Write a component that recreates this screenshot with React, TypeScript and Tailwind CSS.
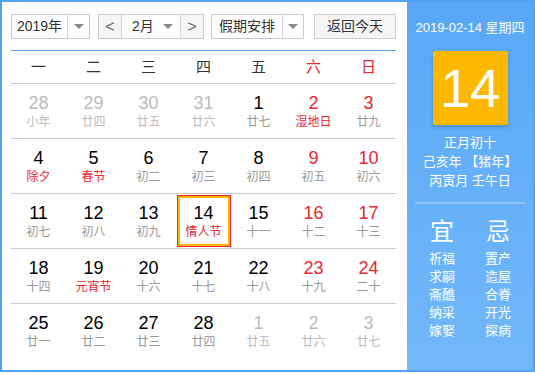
import React from 'react';

type Day = {
  n: number;
  lunar: string;
  other?: boolean;
  weekend?: boolean;
  festival?: boolean;
  today?: boolean;
};

const weeks: Day[][] = [
  [
    { n: 28, lunar: '小年', other: true },
    { n: 29, lunar: '廿四', other: true },
    { n: 30, lunar: '廿五', other: true },
    { n: 31, lunar: '廿六', other: true },
    { n: 1, lunar: '廿七' },
    { n: 2, lunar: '湿地日', weekend: true, festival: true },
    { n: 3, lunar: '廿九', weekend: true },
  ],
  [
    { n: 4, lunar: '除夕', festival: true },
    { n: 5, lunar: '春节', festival: true },
    { n: 6, lunar: '初二' },
    { n: 7, lunar: '初三' },
    { n: 8, lunar: '初四' },
    { n: 9, lunar: '初五', weekend: true },
    { n: 10, lunar: '初六', weekend: true },
  ],
  [
    { n: 11, lunar: '初七' },
    { n: 12, lunar: '初八' },
    { n: 13, lunar: '初九' },
    { n: 14, lunar: '情人节', festival: true, today: true },
    { n: 15, lunar: '十一' },
    { n: 16, lunar: '十二', weekend: true },
    { n: 17, lunar: '十三', weekend: true },
  ],
  [
    { n: 18, lunar: '十四' },
    { n: 19, lunar: '元宵节', festival: true },
    { n: 20, lunar: '十六' },
    { n: 21, lunar: '十七' },
    { n: 22, lunar: '十八' },
    { n: 23, lunar: '十九', weekend: true },
    { n: 24, lunar: '二十', weekend: true },
  ],
  [
    { n: 25, lunar: '廿一' },
    { n: 26, lunar: '廿二' },
    { n: 27, lunar: '廿三' },
    { n: 28, lunar: '廿四' },
    { n: 1, lunar: '廿五', other: true },
    { n: 2, lunar: '廿六', other: true },
    { n: 3, lunar: '廿七', other: true },
  ],
];

const weekdays = ['一', '二', '三', '四', '五', '六', '日'];
const yi = ['祈福', '求嗣', '斋醮', '纳采', '嫁娶'];
const ji = ['置产', '造屋', '合脊', '开光', '探病'];

function Caret() {
  return <span className="h-0 w-0 border-x-[5px] border-t-[5px] border-x-transparent border-t-[#888]" />;
}

function DayCell({ d }: { d: Day }) {
  const numColor = d.other ? 'text-[#bbbbbb]' : d.weekend ? 'text-[#e8262f]' : 'text-black';
  const lunarColor = d.other ? 'text-[#bbbbbb]' : d.festival ? 'text-[#e8262f]' : 'text-[#999999]';
  const inner = (
    <>
      <span className={`text-[18px] leading-[20px] ${numColor}`}>{d.n}</span>
      <span className={`mt-[1px] text-[12px] leading-[16px] ${lunarColor}`}>{d.lunar}</span>
    </>
  );
  if (d.today) {
    return (
      <div className="flex h-full items-center justify-center">
        <div className="h-[52px] w-[54px] border border-[#e8262f]">
          <div className="flex h-full w-full flex-col items-center justify-center border-2 border-[#ffb400]">
            {inner}
          </div>
        </div>
      </div>
    );
  }
  return <div className="flex h-full flex-col items-center justify-center">{inner}</div>;
}

export default function App() {
  return (
    <div
      className="flex h-[372px] w-[535px] border-2 border-[#4fa2f6] bg-white"
      style={{ fontFamily: '"Liberation Sans", "Noto Sans CJK SC", sans-serif' }}
    >
      {/* Left: calendar */}
      <div className="flex w-[405px] flex-col pl-[9px] pr-[11px] pt-[12px]">
        <div className="flex h-[25px] items-stretch text-[14px] text-[#333]">
          <div className="flex w-[79px] border border-[#c9c9c9]">
            <span className="flex w-[55px] items-center justify-center">2019年</span>
            <span className="flex flex-1 items-center justify-center border-l border-[#d9d9d9]"><Caret /></span>
          </div>
          <div className="ml-[8px] flex w-[106px] border border-[#c9c9c9]">
            <span className="flex w-[22px] items-center justify-center bg-[#f5f5f5] text-[16px] text-[#666]">&lt;</span>
            <span className="flex w-[60px] items-center justify-between border-x border-[#d9d9d9] pl-[10px] pr-[7px]">
              2月<Caret />
            </span>
            <span className="flex flex-1 items-center justify-center bg-[#f5f5f5] text-[16px] text-[#666]">&gt;</span>
          </div>
          <div className="ml-[7px] flex w-[93px] border border-[#c9c9c9]">
            <span className="flex w-[70px] items-center justify-center">假期安排</span>
            <span className="flex flex-1 items-center justify-center border-l border-[#d9d9d9]"><Caret /></span>
          </div>
          <div className="ml-[10px] flex flex-1 items-center justify-center border border-[#d0d0d0] bg-[#f5f5f5]">
            返回今天
          </div>
        </div>

        <div className="mt-[11px] h-px bg-[#4fa2f6]" />

        <div className="grid h-[33px] grid-cols-7 items-center border-b border-[#cccccc] text-[15px]">
          {weekdays.map((w, i) => (
            <span key={w} className={`text-center ${i >= 5 ? 'text-[#e8262f]' : 'text-[#333]'}`}>{w}</span>
          ))}
        </div>

        {weeks.map((week, wi) => (
          <div
            key={wi}
            className={`grid h-[55px] grid-cols-7 ${wi < weeks.length - 1 ? 'border-b border-[#cccccc]' : ''}`}
          >
            {week.map((d, di) => (
              <DayCell key={di} d={d} />
            ))}
          </div>
        ))}
      </div>

      {/* Right: today detail */}
      <div className="flex flex-1 flex-col items-center bg-gradient-to-b from-[#58a8f7] to-[#72b8f9] text-white">
        <div className="mt-[17px] text-[13px] leading-[18px]">2019-02-14 星期四</div>
        <div className="mt-[14px] flex h-[74px] w-[75px] items-center justify-center rounded-[2px] bg-[#ffb800] text-[54px] font-light shadow-[0_2px_4px_rgba(0,0,0,0.2)]">
          14
        </div>
        <div className="mt-[8px] text-center text-[13px] leading-[19px]">
          <div>正月初十</div>
          <div>己亥年 【猪年】</div>
          <div>丙寅月 壬午日</div>
        </div>
        <div className="mt-[12px] h-[2px] w-[110px] bg-[#8ec6fa]" />
        <div className="mt-[13px] grid w-[82px] grid-cols-2 gap-x-[30px]">
          <div className="flex flex-col items-center">
            <span className="text-[24px] leading-[30px]">宜</span>
            <div className="mt-[3px] flex flex-col text-[13px] leading-[18px]">
              {yi.map(t => <span key={t}>{t}</span>)}
            </div>
          </div>
          <div className="flex flex-col items-center">
            <span className="text-[24px] leading-[30px]">忌</span>
            <div className="mt-[3px] flex flex-col text-[13px] leading-[18px]">
              {ji.map(t => <span key={t}>{t}</span>)}
            </div>
          </div>
        </div>
      </div>
    </div>
  );
}
